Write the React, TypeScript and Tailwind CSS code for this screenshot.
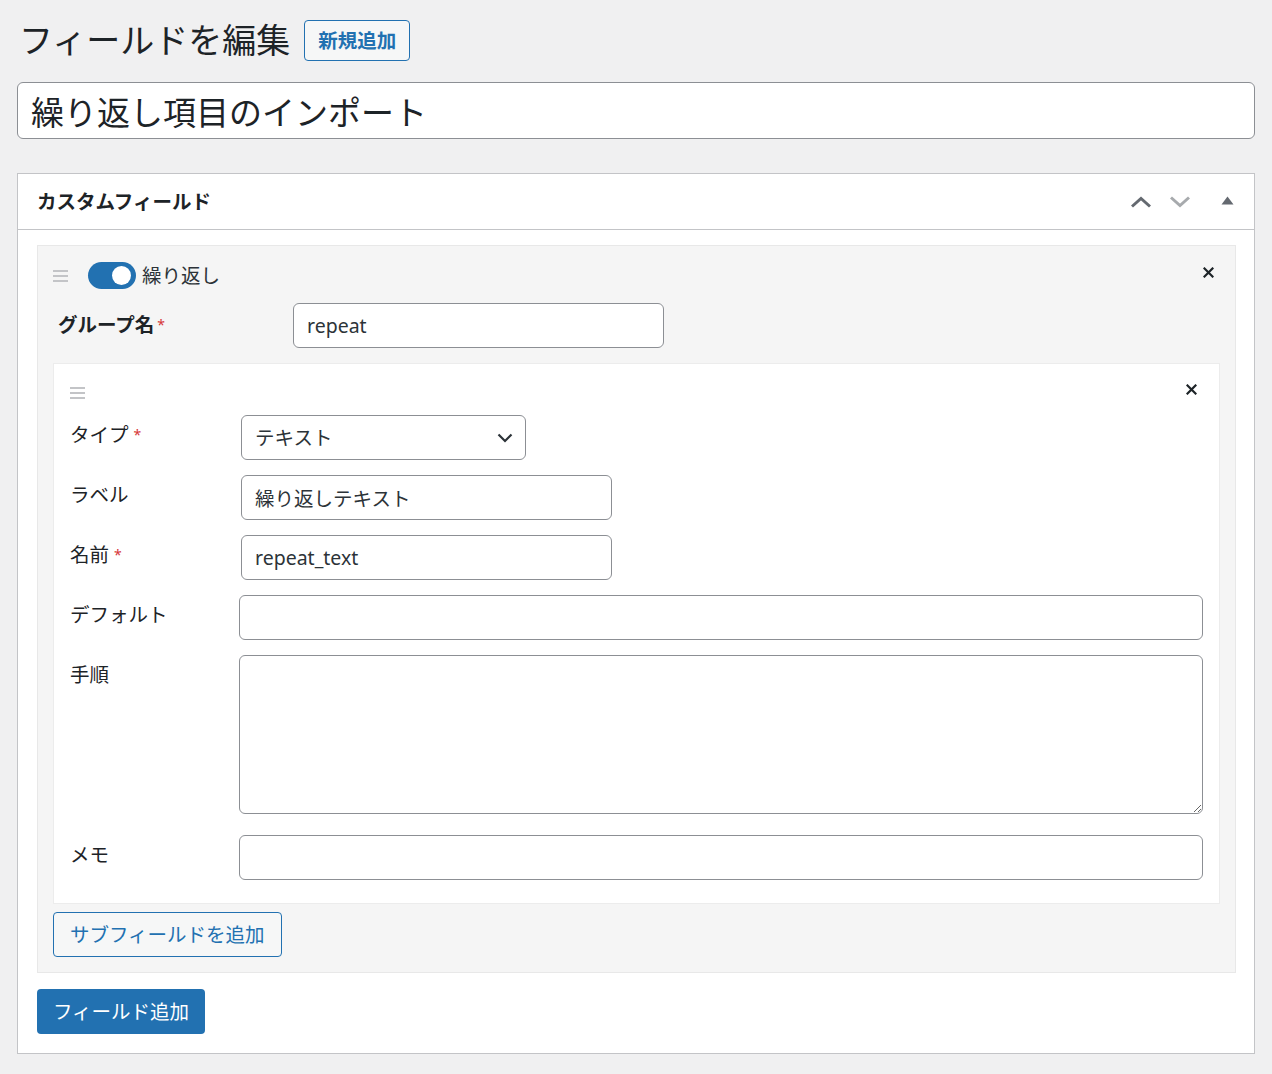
import React from "react";

const FONT = { fontFamily: "'Noto Sans', 'Noto Sans CJK JP', sans-serif" };

function Handle() {
  return (
    <div className="flex w-[15px] flex-col gap-[3px]">
      <span className="h-[2px] bg-[#c3c4c7]" />
      <span className="h-[2px] bg-[#c3c4c7]" />
      <span className="h-[2px] bg-[#c3c4c7]" />
    </div>
  );
}

function Close() {
  return (
    <svg width="11" height="11" viewBox="0 0 11 11" className="text-[#1d2327]">
      <path d="M1.5 1.5 L9.5 9.5 M9.5 1.5 L1.5 9.5" stroke="currentColor" strokeWidth="2.2" strokeLinecap="square" />
    </svg>
  );
}

function Req() {
  return <span className="relative -top-[2px] ml-[5px] text-[14px] text-[#d63638]">*</span>;
}

const inputCls =
  "h-[45px] rounded-[6px] border border-[#8c8f94] bg-white px-[13px] text-[19.5px] text-[#2c3338] outline-none";

function Row({ label, req, children }: { label: string; req?: boolean; children: React.ReactNode }) {
  return (
    <div className="flex items-start">
      <div className="w-[169px] shrink-0 text-[19.5px] leading-[40px] text-[#1d2327]">
        {label}
        {req && <Req />}
      </div>
      {children}
    </div>
  );
}

export default function App() {
  return (
    <div className="min-h-[1074px] bg-[#f0f0f1] px-[17px] pt-[20px] text-[#1d2327]" style={FONT}>
      <div className="flex items-center gap-[14px] pl-[2px]">
        <h1 className="text-[34px] font-normal leading-[41px] text-[#1d2327]">フィールドを編集</h1>
        <button className="h-[41px] rounded-[4px] border border-[#2271b1] bg-[#f6f7f7] px-[13px] text-[19.5px] font-bold text-[#2271b1]">
          新規追加
        </button>
      </div>

      <input
        className="mt-[21px] block h-[57px] w-full rounded-[6px] border border-[#8c8f94] bg-white px-[13px] text-[33px] text-[#1d2327] outline-none"
        defaultValue="繰り返し項目のインポート"
      />

      <div className="mt-[34px] border border-[#c3c4c7] bg-white">
        <div className="flex h-[56px] items-center border-b border-[#c3c4c7] pl-[19px] pr-[20px]">
          <h2 className="flex-1 text-[19.5px] font-bold">カスタムフィールド</h2>
          <svg width="22" height="12" viewBox="0 0 22 12" className="mr-[17px]">
            <path d="M2 10.5 L11 2.5 L20 10.5" fill="none" stroke="#646970" strokeWidth="3" />
          </svg>
          <svg width="22" height="12" viewBox="0 0 22 12" className="mr-[30px]">
            <path d="M2 1.5 L11 9.5 L20 1.5" fill="none" stroke="#a7aaad" strokeWidth="3" />
          </svg>
          <svg width="13" height="9" viewBox="0 0 13 9" className="-mt-[3px]">
            <path d="M6.5 0.5 L12.5 8.5 L0.5 8.5 Z" fill="#646970" />
          </svg>
        </div>

        <div className="pb-[19px] pl-[19px] pr-[18px] pt-[15px]">
          <div className="border border-[#e8e8e8] bg-[#f5f5f5] px-[15px] pb-[15px] pt-[15px]">
            <div className="flex items-center">
              <Handle />
              <div className="ml-[20px] flex h-[27px] w-[48px] items-center justify-end rounded-full bg-[#2271b1] pr-[5px]">
                <span className="h-[19px] w-[19px] rounded-full bg-white" />
              </div>
              <span className="ml-[6px] flex-1 text-[19.5px] text-[#2c3338]">繰り返し</span>
              <span className="mr-[6px] -mt-[6px]">
                <Close />
              </span>
            </div>

            <div className="mt-[13px] flex items-start">
              <div className="w-[240px] shrink-0 pl-[5px] text-[19.5px] font-bold leading-[44px] text-[#1d2327]">
                グループ名
                <span className="relative -top-[2px] ml-[3px] text-[14px] font-normal text-[#d63638]">*</span>
              </div>
              <input className={inputCls + " w-[371px]"} defaultValue="repeat" />
            </div>

            <div className="mt-[14px] border border-[#ececec] bg-white px-[16px] pb-[23px] pt-[23px]">
              <div className="flex items-center">
                <Handle />
                <span className="relative -top-[4px] ml-auto mr-[6px]">
                  <Close />
                </span>
              </div>

              <div className="mt-[16px] flex flex-col gap-[15px]">
                <Row label="タイプ" req>
                  <div className="relative ml-[2px]">
                    <select
                      className={inputCls + " w-[285px] appearance-none"}
                      defaultValue="テキスト"
                    >
                      <option>テキスト</option>
                    </select>
                    <svg width="16" height="10" viewBox="0 0 16 10" className="pointer-events-none absolute right-[13px] top-[18px]">
                      <path d="M1.5 1.5 L8 8 L14.5 1.5" fill="none" stroke="#2c3338" strokeWidth="2.2" />
                    </svg>
                  </div>
                </Row>
                <Row label="ラベル">
                  <input className={inputCls + " ml-[2px] w-[371px]"} defaultValue="繰り返しテキスト" />
                </Row>
                <Row label="名前" req>
                  <input className={inputCls + " ml-[2px] w-[371px]"} defaultValue="repeat_text" />
                </Row>
                <Row label="デフォルト">
                  <input className={inputCls + " flex-1"} />
                </Row>
                <Row label="手順">
                  <textarea className="h-[159px] flex-1 rounded-[6px] border border-[#8c8f94] bg-white px-[13px] text-[19.5px] outline-none" />
                </Row>
                <div className="mt-[6px]">
                  <Row label="メモ">
                    <input className={inputCls + " flex-1"} />
                  </Row>
                </div>
              </div>
            </div>

            <button className="mt-[8px] h-[45px] rounded-[4px] border border-[#2271b1] bg-[#f6f7f7] px-[16px] text-[19.5px] text-[#2271b1]">
              サブフィールドを追加
            </button>
          </div>

          <button className="mt-[16px] h-[45px] rounded-[4px] bg-[#2271b1] px-[16px] text-[19.5px] text-white">
            フィールド追加
          </button>
        </div>
      </div>
    </div>
  );
}
